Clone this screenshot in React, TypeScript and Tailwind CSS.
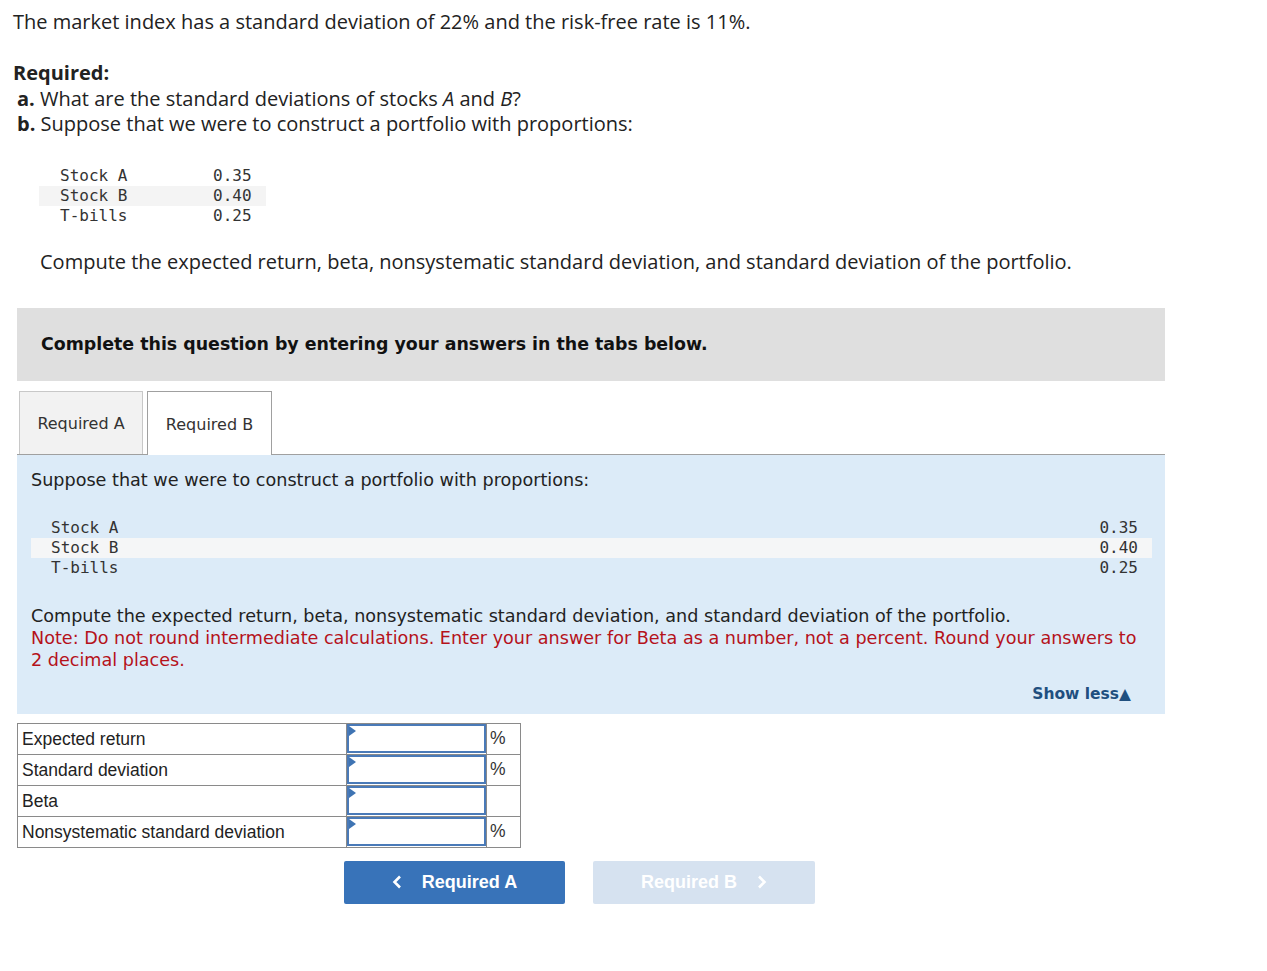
import React from "react";

const proxima = { fontFamily: "'Open Sans', Lato, sans-serif" };
const verdana = { fontFamily: "'DejaVu Sans', Verdana, sans-serif" };
const mono = { fontFamily: "'DejaVu Sans Mono', Consolas, monospace" };
const arial = { fontFamily: "'Liberation Sans', Arial, sans-serif" };

function Arrow() {
  return (
    <svg className="absolute left-0 top-0" width="8" height="10" viewBox="0 0 8 10">
      <polygon points="0,0 7,5 0,10" fill="#3f74b3" />
    </svg>
  );
}

export default function App() {
  const rows = [
    { label: "Expected return", pct: true },
    { label: "Standard deviation", pct: true },
    { label: "Beta", pct: false },
    { label: "Nonsystematic standard deviation", pct: true },
  ];
  return (
    <div className="w-[1267px] min-h-[971px] bg-white text-[#222]">
      <div style={proxima} className="pl-[13px] pt-[9px] text-[20px] leading-[26px] text-[#222]">
        The market index has a standard deviation of 22% and the risk-free rate is 11%.
      </div>
      <div style={proxima} className="pl-[13px] pt-[25px] text-[20px] leading-[25.5px]">
        <div className="font-bold">Required:</div>
        <div className="pl-[4px]">
          <span className="font-bold">a.</span> What are the standard deviations of stocks <i>A</i> and <i>B</i>?
        </div>
        <div className="pl-[4px]">
          <span className="font-bold">b.</span> Suppose that we were to construct a portfolio with proportions:
        </div>
      </div>
      <div style={mono} className="ml-[39px] mt-[29px] w-[227px] text-[16px] leading-[20px] text-[#333]">
        <div className="flex pl-[21px]"><span className="w-[153px]">Stock A</span><span>0.35</span></div>
        <div className="flex pl-[21px] bg-[#f4f4f4]"><span className="w-[153px]">Stock B</span><span>0.40</span></div>
        <div className="flex pl-[21px]"><span className="w-[153px]">T-bills</span><span>0.25</span></div>
      </div>
      <div style={proxima} className="pl-[40px] pt-[23px] text-[20px] leading-[26px]">
        Compute the expected return, beta, nonsystematic standard deviation, and standard deviation of the portfolio.
      </div>

      <div className="ml-[17px] mt-[33px] w-[1148px] h-[73px] bg-[#dfdfdf] flex items-center pl-[24px]">
        <span style={verdana} className="font-bold text-[17.4px] text-[#111]">
          Complete this question by entering your answers in the tabs below.
        </span>
      </div>

      <div className="ml-[17px] mt-[10px] w-[1148px] flex items-end gap-[4px] pl-[2px] border-b border-[#a0a0a0] h-[64px]">
        <div style={verdana} className="w-[124px] h-[63px] pt-[3px] bg-[#f2f2f2] border border-b-0 border-[#c8c8c8] flex items-center justify-center text-[16px] text-[#333]">
          Required A
        </div>
        <div style={verdana} className="w-[125px] h-[64px] pt-[3px] -mb-px bg-white border border-b-0 border-[#a0a0a0] flex items-center justify-center text-[16px] text-[#333]">
          Required B
        </div>
      </div>

      <div style={verdana} className="ml-[17px] w-[1148px] h-[259px] bg-[#dcebf8] pl-[14px] pr-[13px] pt-[13px] text-[17.6px] text-[#222]">
        <div className="leading-[24px]">Suppose that we were to construct a portfolio with proportions:</div>
        <div style={mono} className="mt-[26px] text-[16px] leading-[20px] text-[#333]">
          <div className="flex justify-between pl-[20px] pr-[14px]"><span>Stock A</span><span>0.35</span></div>
          <div className="flex justify-between pl-[20px] pr-[14px] bg-[#f5f6f7]"><span>Stock B</span><span>0.40</span></div>
          <div className="flex justify-between pl-[20px] pr-[14px]"><span>T-bills</span><span>0.25</span></div>
        </div>
        <div className="mt-[27px] leading-[22px]">
          Compute the expected return, beta, nonsystematic standard deviation, and standard deviation of the portfolio.
        </div>
        <div className="leading-[22px] text-[#b5121b]">
          Note: Do not round intermediate calculations. Enter your answer for Beta as a number, not a percent. Round your answers to 2 decimal places.
        </div>
        <div className="flex justify-end pr-[21px] mt-[12px]">
          <span className="font-bold text-[15.5px] text-[#1f4f7f]">Show less▲</span>
        </div>
      </div>

      <table style={arial} className="ml-[17px] mt-[9px] border-collapse text-[17.5px] text-[#222]">
        <tbody>
          {rows.map((r) => (
            <tr key={r.label} className="h-[31px]">
              <td className="w-[329px] border border-[#8a8a8a] pl-[4px] py-0 leading-[18px]">{r.label}</td>
              <td className="w-[140px] border border-[#8a8a8a] p-0 relative">
                <div className="relative h-[29px] border-2 border-[#4a7ab8] bg-white">
                  <Arrow />
                </div>
              </td>
              <td className="w-[34px] border border-[#8a8a8a] pl-[3px] text-[#333]">{r.pct ? "%" : ""}</td>
            </tr>
          ))}
        </tbody>
      </table>

      <div style={arial} className="flex gap-[28px] ml-[344px] mt-[13px]">
        <button className="w-[221px] h-[43px] rounded-[2px] bg-[#3873b9] text-white font-bold text-[18px] flex items-center justify-center gap-[20px]">
          <svg width="10" height="14" viewBox="0 0 10 14"><polyline points="8,1.5 2.5,7 8,12.5" fill="none" stroke="white" strokeWidth="2.6" /></svg>
          <span>Required A</span>
        </button>
        <button className="w-[222px] h-[43px] rounded-[2px] bg-[#d6e2f0] text-white font-bold text-[18px] flex items-center justify-center gap-[20px]">
          <span>Required B</span>
          <svg width="10" height="14" viewBox="0 0 10 14"><polyline points="2,1.5 7.5,7 2,12.5" fill="none" stroke="white" strokeWidth="2.6" /></svg>
        </button>
      </div>
    </div>
  );
}
